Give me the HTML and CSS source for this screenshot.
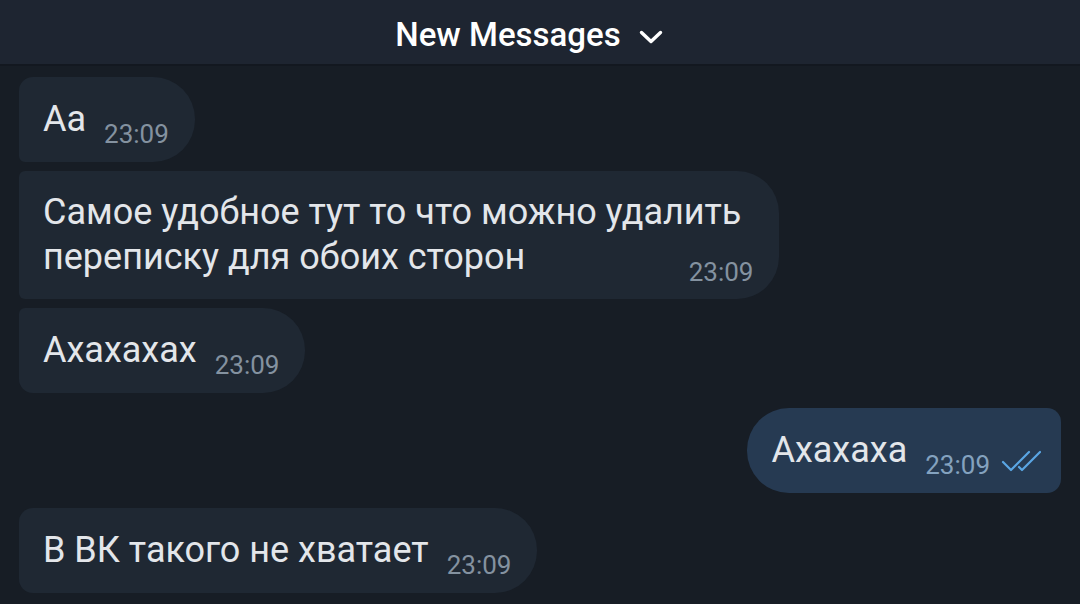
FILE: index.html
```html
<!DOCTYPE html>
<html lang="ru">
<head>
  <meta charset="UTF-8">
  <title>Chat</title>
  <link rel="stylesheet" href="styles.css">
</head>
<body>
  <header class="topbar">
    <span class="topbar-title">New Messages</span>
    <svg class="chevron" width="24" height="14" viewBox="0 0 24 14">
      <polyline points="2.5,2.5 12,11.5 21.5,2.5" fill="none" stroke="#ffffff" stroke-width="3.4" stroke-linecap="round" stroke-linejoin="round" />
    </svg>
  </header>

  <main class="chat">
    <div class="group">
      <div class="bubble in first">
        <span class="text">Aa</span>
        <span class="time">23:09</span>
      </div>
      <div class="bubble in mid multi">
        <span class="text">Самое удобное тут то что можно удалить<br>переписку для обоих сторон</span>
        <span class="time">23:09</span>
      </div>
      <div class="bubble in last">
        <span class="text">Ахахахах</span>
        <span class="time">23:09</span>
      </div>
    </div>

    <div class="group out-group">
      <div class="bubble out single">
        <span class="text">Ахахаха</span>
        <span class="time">23:09</span>
        <svg class="checks" width="40" height="22" viewBox="0 0 40 22">
          <!-- double tick -->
          <polyline points="2,12 10,20 28,2" fill="none" stroke="#5aa6e4" stroke-width="2.2" stroke-linecap="round" stroke-linejoin="round" />
          <polyline points="18,17 21,20 39,2" fill="none" stroke="#5aa6e4" stroke-width="2.2" stroke-linecap="round" stroke-linejoin="round" />
        </svg>
      </div>
    </div>

    <div class="group">
      <div class="bubble in single">
        <span class="text">В ВК такого не хватает</span>
        <span class="time">23:09</span>
      </div>
    </div>
  </main>
</body>
</html>
```

FILE: styles.css
```css
body {
  margin: 0;
  background: #171d25;
  font-family: Roboto, "Noto Sans", sans-serif;
  color: #e3e6ea;
  overflow: hidden;
}

.topbar {
  height: 64px;
  background: #1e2531;
  border-bottom: 2px solid #131820;
  display: flex;
  align-items: center;
  justify-content: center;
  gap: 18px;
  padding-right: 22px;
}

.topbar-title {
  font-size: 33px;
  font-weight: 500;
  color: #ffffff;
  margin-top: 4px;
}

.chevron {
  margin-top: 10px;
}

.chat {
  display: flex;
  flex-direction: column;
  gap: 15px;
  padding: 11px 19px;
}

.group {
  display: flex;
  flex-direction: column;
  align-items: flex-start;
  gap: 9px;
}

.out-group {
  align-items: flex-end;
}

.bubble {
  display: flex;
  align-items: flex-end;
  background: #1f2833;
  padding: 20px 26px 20px 24px;
  border-radius: 42px;
}

.bubble.in.first {
  border-radius: 14px 42px 42px 6px;
}

.bubble.in.mid {
  border-radius: 6px 42px 42px 6px;
}

.bubble.in.last {
  border-radius: 6px 42px 42px 14px;
}

.bubble.in.single {
  border-radius: 14px 42px 42px 14px;
}

.bubble.out {
  background: #263a52;
  padding-right: 20px;
}

.bubble.out.single {
  border-radius: 42px 14px 14px 42px;
}

.text {
  font-size: 36px;
  line-height: 45px;
  white-space: nowrap;
}

.time {
  font-size: 26px;
  line-height: 26px;
  color: #8492a0;
  margin-left: 18px;
  margin-bottom: -5px;
}

.bubble.multi {
  flex-direction: column;
  align-items: stretch;
  padding: 19px 38px 20px 24px;
}

.bubble.multi .time {
  align-self: flex-end;
  margin-top: -21px;
  margin-right: -12px;
  margin-bottom: -6px;
}

.bubble.out .time {
  color: #84a2bf;
}

.checks {
  margin-left: 11px;
  margin-bottom: 1px;
}
```
